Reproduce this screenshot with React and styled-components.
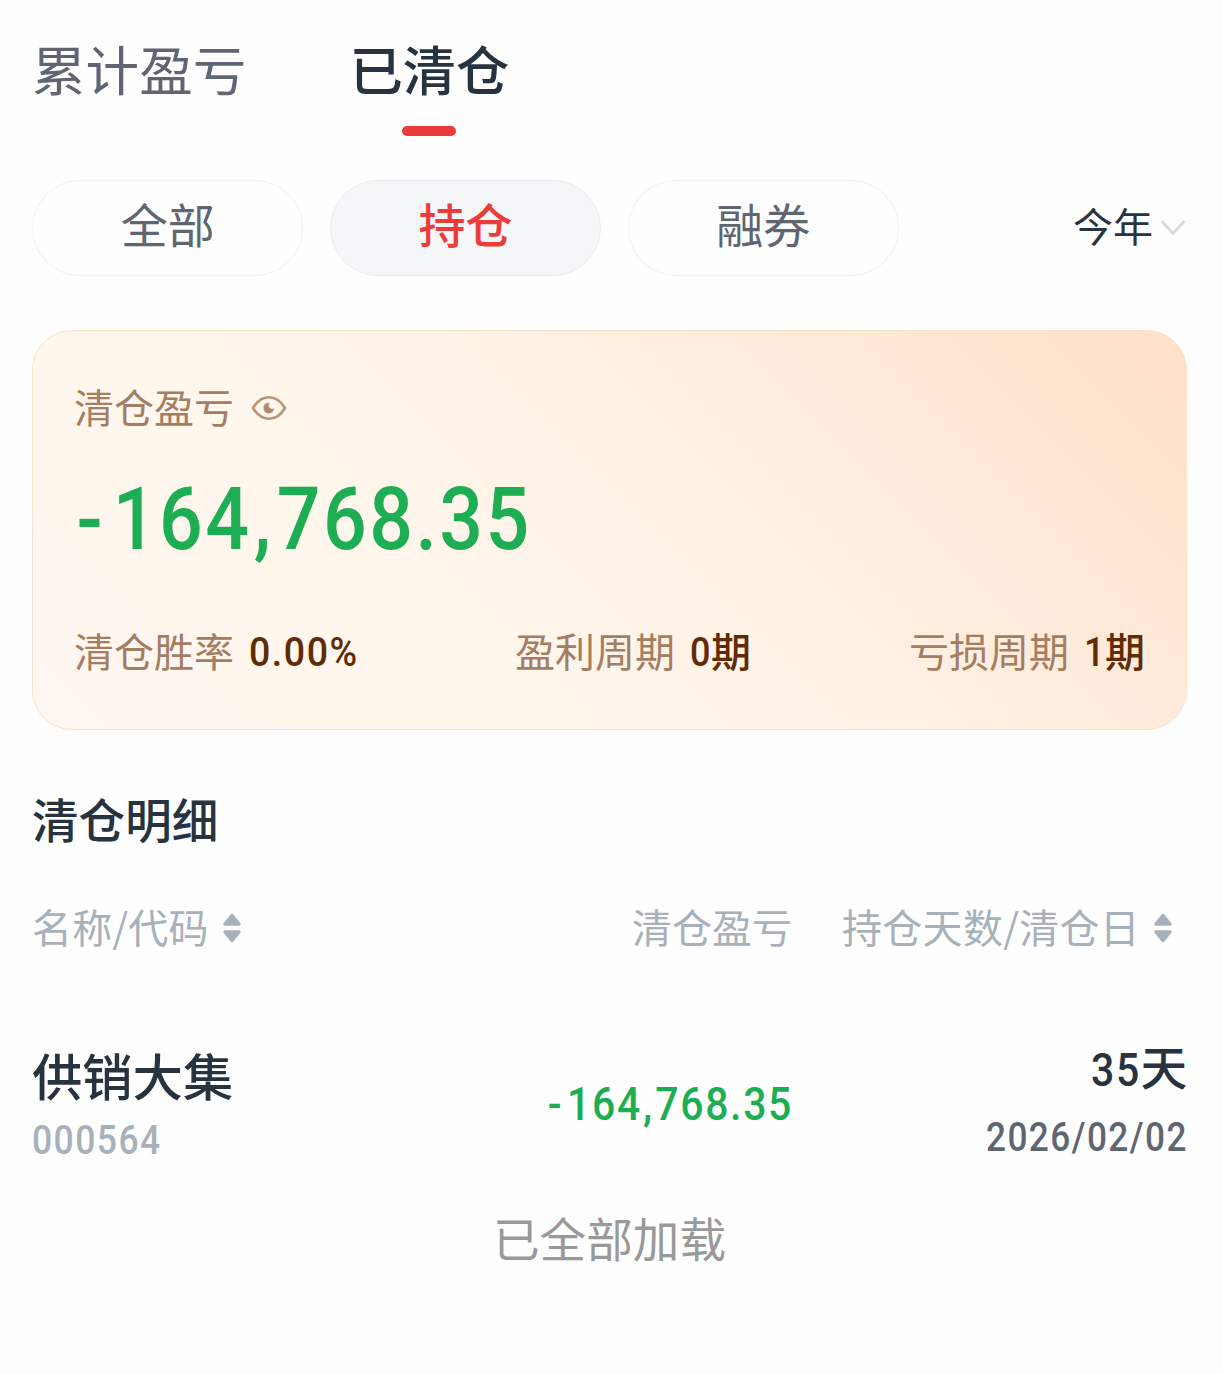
import React from "react";
import styled, { createGlobalStyle } from "styled-components";

const color = {
  ink: "#27333f",
  slate: "#5f6671",
  mute: "#a8b0ba",
  red: "#eb3b3b",
  green: "#1dae53",
  brown: "#a37e63",
  umber: "#602b05",
};

const Global = createGlobalStyle`
  * { box-sizing: border-box; }
  body {
    margin: 0;
    background: #fefefe;
    font-family: "Noto Sans CJK SC", sans-serif;
    color: ${color.ink};
  }
`;

const Page = styled.main`
  display: flex;
  flex-direction: column;
  width: 1223px;
  height: 1374px;
  padding: 28px 36px 0 32px;
  overflow: hidden;
`;

const Text = styled.span`
  flex: none;
  font-size: ${(p) => p.$size}px;
  line-height: ${(p) => p.$line || 60}px;
  font-weight: ${(p) => p.$weight || 400};
  letter-spacing: ${(p) => p.$spacing || 0}px;
  color: ${(p) => p.$color || color.ink};
  white-space: nowrap;
`;

const Figure = styled.span`
  display: inline-block;
  flex: none;
  width: ${(p) => p.$width}px;
  margin-top: ${(p) => p.$top || 0}px;
  font-family: Roboto, "Noto Sans CJK SC", sans-serif;
  font-weight: 500;
  font-size: ${(p) => p.$size}px;
  line-height: ${(p) => p.$line || 60}px;
  letter-spacing: ${(p) => p.$spacing || 0.041}em;
  color: ${(p) => p.$color};
  white-space: nowrap;
  transform: scaleX(${(p) => p.$stretch || 0.88});
  transform-origin: left center;
`;

const Sign = styled.span`
  padding-left: 0.02em;
  letter-spacing: 0.13em;
`;

const Comma = styled.span`
  padding-left: 0.03em;
  letter-spacing: 0.075em;
`;

const Tabs = styled.nav`
  display: flex;
  gap: 103px;
  height: 108px;
`;

const Tab = styled.div`
  display: flex;
  flex-direction: column;
  align-items: center;
  gap: 18px;
`;

const Underline = styled.i`
  width: 54px;
  height: 10px;
  border-radius: 5px;
  background: ${color.red};
`;

const Filters = styled.div`
  display: flex;
  align-items: center;
  gap: 26.4px;
  height: 96px;
  margin-top: 44px;
`;

const Pill = styled.button`
  display: flex;
  justify-content: center;
  width: 271.4px;
  height: 96px;
  padding: 12px 0 0;
  border: 1px solid ${(p) => (p.$active ? "#e9edee" : "#f0f1f2")};
  border-radius: 48px;
  background: ${(p) => (p.$active ? "#f4f6f8" : "transparent")};
  font: inherit;
`;

const Period = styled.div`
  display: flex;
  align-items: center;
  gap: 8px;
  margin-left: auto;
  padding-right: 2px;
`;

const PeriodLabel = styled(Text)`
  padding-bottom: 7px;
`;

const Card = styled.section`
  display: flex;
  flex-direction: column;
  width: 1155px;
  height: 400px;
  margin-top: 54px;
  padding: 45px 41px 0;
  border: 1px solid #fae2c6;
  border-radius: 40px;
  background: linear-gradient(45deg, #fff7f1 0%, #fff6ec 35%, #fff1e4 58%, #ffeada 75%, #ffe0c7 100%);
`;

const CardTitle = styled.div`
  display: flex;
  align-items: center;
  gap: 17px;
  height: 60px;
`;

const Amount = styled.div`
  display: flex;
  height: 100px;
  margin-top: 33px;
  padding-left: 1px;
`;

const Stats = styled.div`
  display: flex;
  justify-content: space-between;
  margin-top: 51px;
`;

const Stat = styled.div`
  display: flex;
  gap: 15px;
`;

const Value = styled.div`
  display: flex;
`;

const TableHead = styled.div`
  display: grid;
  grid-template-columns: 1fr auto 345px;
  column-gap: 50px;
  margin-top: 48px;
`;

const HeadCell = styled.div`
  display: flex;
  align-items: center;
  gap: 14.4px;
`;

const Row = styled.div`
  display: grid;
  grid-template-columns: 1fr 245px 395px;
  align-items: start;
  margin-top: 79px;
`;

const Stack = styled.div`
  display: flex;
  flex-direction: column;
  align-items: ${(p) => p.$align || "flex-start"};
  padding-top: ${(p) => p.$top || 0}px;
`;

const Loaded = styled.footer`
  display: flex;
  justify-content: center;
  margin-top: 37px;
`;

const Spaced = styled.div`
  display: flex;
  margin-top: ${(p) => p.$top}px;
`;

const Sort = styled.svg`
  flex: none;
  margin-top: 4px;
`;

const Eye = styled.svg`
  flex: none;
  margin-top: 4px;
`;

const SortIcon = () => (
  <Sort width="18" height="30" viewBox="0 0 18 30" fill={color.mute}>
    <path d="M7.6 1.400Q9 0.100 10.400 1.400L17.400 10.300Q18.300 12.800 16 12.800H2Q-.3 12.800 .6 10.300Z" />
    <path d="M7.600 28.600Q9 29.900 10.400 28.600L17.400 19.700Q18.300 17.200 16 17.200H2Q-.3 17.200 .6 19.700Z" />
  </Sort>
);

const EyeIcon = () => (
  <Eye width="36" height="26" viewBox="0 0 36 26" fill="none">
    <path
      d="M2 13C6.500 5.500 11.500 2.200 18 2.200S29.500 5.500 34 13C29.500 20.500 24.500 23.800 18 23.800S6.500 20.500 2 13Z"
      stroke="#b89479"
      strokeWidth="2.600"
      strokeLinejoin="round"
    />
    <path d="M19 7.800A5.400 5.400 0 1 0 23.200 13A3 3 0 0 1 19 7.800Z" fill="#b08b70" />
  </Eye>
);

const Chevron = () => (
  <svg width="24" height="16" viewBox="0 0 24 16" fill="none">
    <path d="M1.500 2L12 13.500L22.500 2" stroke="#d5d8db" strokeWidth="2.600" strokeLinecap="round" />
  </svg>
);

const Loss = () => (
  <>
    <Sign>-</Sign>164<Comma>,</Comma>768.35
  </>
);

const filters = ["全部", "持仓", "融券"];

export default function App() {
  return (
    <Page>
      <Global />
      <Tabs>
        <Tab>
          <Text $size={53.6} $line={80} $color={color.slate}>累计盈亏</Text>
        </Tab>
        <Tab>
          <Text $size={53.3} $line={80} $weight={500}>已清仓</Text>
          <Underline />
        </Tab>
      </Tabs>

      <Filters>
        {filters.map((name) => (
          <Pill key={name} $active={name === "持仓"}>
            <Text
              $size={47}
              $weight={name === "持仓" ? 500 : 400}
              $color={name === "持仓" ? color.red : color.slate}
            >
              {name}
            </Text>
          </Pill>
        ))}
        <Period>
          <PeriodLabel $size={40}>今年</PeriodLabel>
          <Chevron />
        </Period>
      </Filters>

      <Card>
        <CardTitle>
          <Text $size={40} $color={color.brown}>清仓盈亏</Text>
          <EyeIcon />
        </CardTitle>
        <Amount>
          <Figure $size={87.5} $line={100} $width={455} $spacing={0.032} $color={color.green}><Loss /></Figure>
        </Amount>
        <Stats>
          <Stat>
            <Text $size={40} $color={color.brown}>清仓胜率</Text>
            <Figure $size={41} $top={2} $width={108} $stretch={0.915} $color={color.umber}>0.00%</Figure>
          </Stat>
          <Stat>
            <Text $size={40} $color={color.brown}>盈利周期</Text>
            <Value>
              <Figure $size={41} $top={2} $width={21} $color={color.umber}>0</Figure>
              <Text $size={40} $weight={500} $color={color.umber}>期</Text>
            </Value>
          </Stat>
          <Stat>
            <Text $size={40} $color={color.brown}>亏损周期</Text>
            <Value>
              <Figure $size={41} $top={2} $width={21} $color={color.umber}>1</Figure>
              <Text $size={40} $weight={500} $color={color.umber}>期</Text>
            </Value>
          </Stat>
        </Stats>
      </Card>

      <Spaced $top={58}>
        <Text $size={46.6} $weight={500}>清仓明细</Text>
      </Spaced>

      <TableHead>
        <HeadCell>
          <Text $size={40} $spacing={0.2} $color={color.mute}>名称/代码</Text>
          <SortIcon />
        </HeadCell>
        <HeadCell>
          <Text $size={40} $color={color.mute}>清仓盈亏</Text>
        </HeadCell>
        <HeadCell>
          <Text $size={40} $spacing={0.3} $color={color.mute}>持仓天数/清仓日</Text>
          <SortIcon />
        </HeadCell>
      </TableHead>

      <Row>
        <Stack $top={9}>
          <Text $size={50.3} $weight={500}>供销大集</Text>
          <Figure $size={41} $top={6} $width={128} $stretch={0.865} $color={color.mute}>000564</Figure>
        </Stack>
        <Spaced $top={39}>
          <Figure $size={46.5} $width={245} $color={color.green}><Loss /></Figure>
        </Spaced>
        <Stack $align="flex-end">
          <Value>
            <Figure $size={46.5} $top={5} $width={49.5} $color={color.ink}>35</Figure>
            <Text $size={46.6} $weight={500}>天</Text>
          </Value>
          <Figure $size={41} $top={7} $width={201.5} $stretch={0.858} $color={color.slate}>2026/02/02</Figure>
        </Stack>
      </Row>

      <Loaded>
        <Text $size={46.6} $color="#999999">已全部加载</Text>
      </Loaded>
    </Page>
  );
}
